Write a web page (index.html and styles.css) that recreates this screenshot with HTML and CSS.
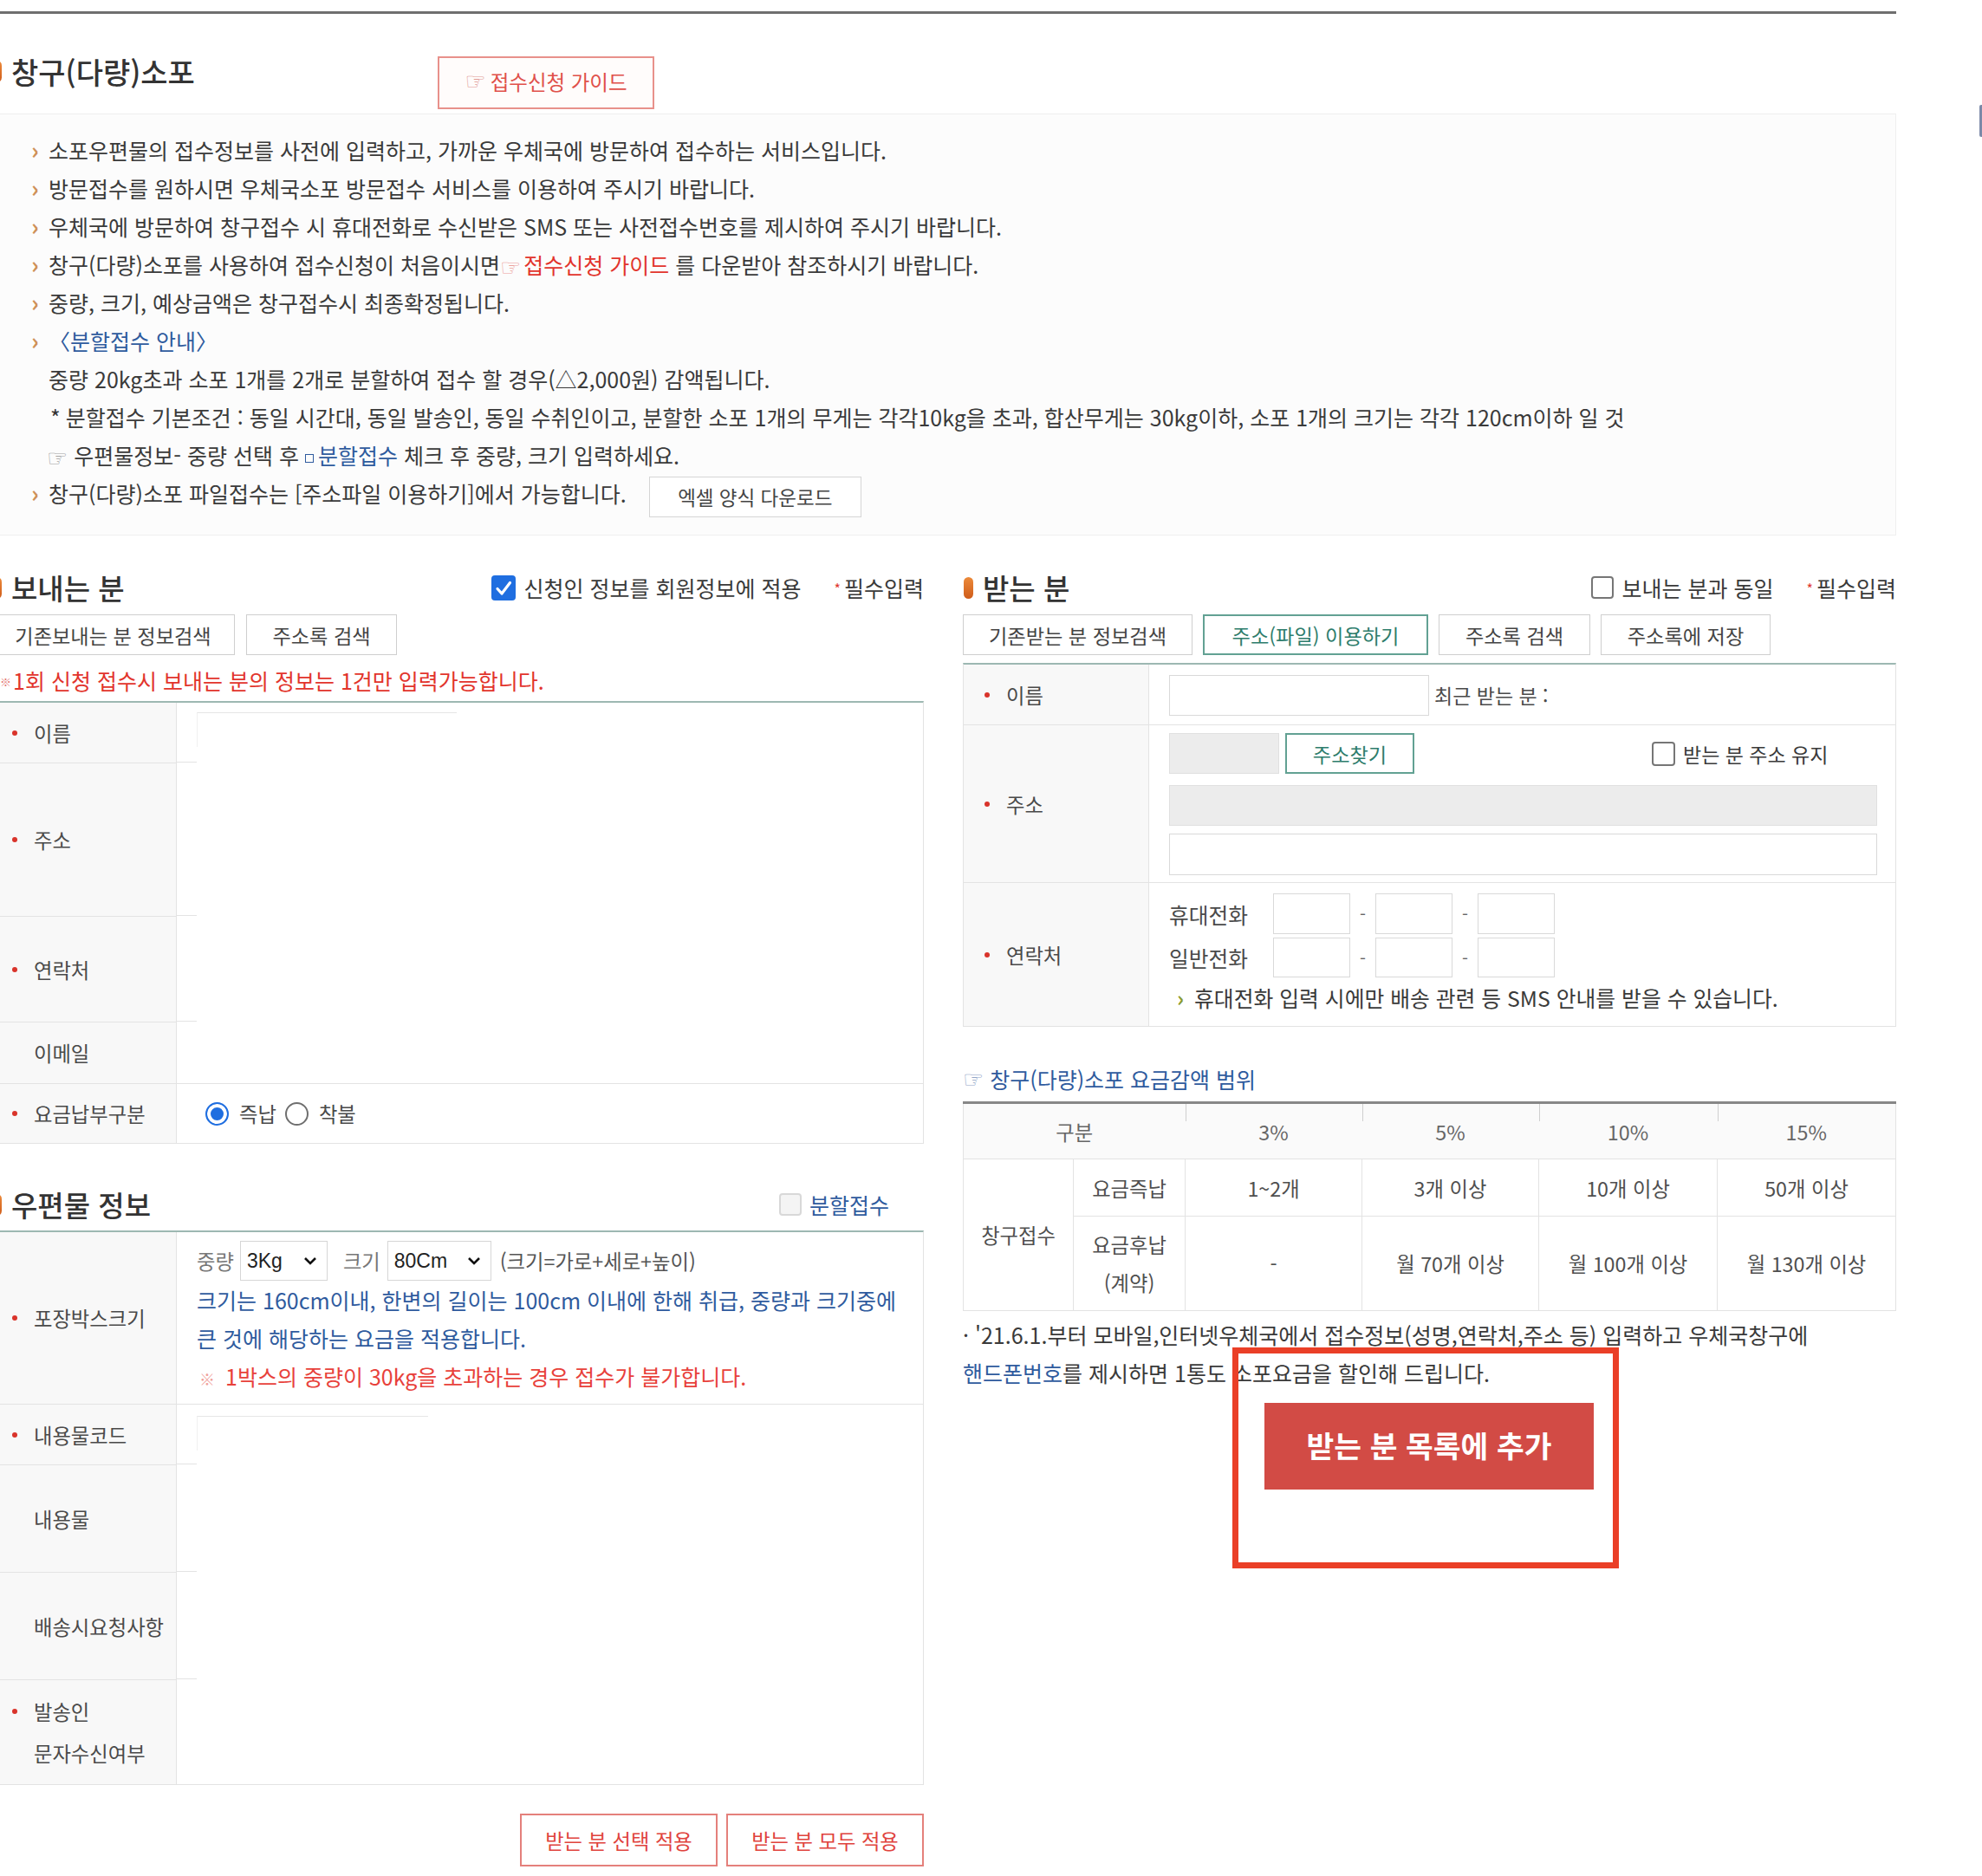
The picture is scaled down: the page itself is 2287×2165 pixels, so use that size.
FILE: index.html
```html
<!DOCTYPE html>
<html lang="ko">
<head>
<meta charset="utf-8">
<title>창구(다량)소포</title>
<link rel="stylesheet" href="styles.css">
</head>
<body>
<div class="page">
  <div class="toprule"></div>

  <div class="title-row">
    <h2 class="h-title"><span class="mark"></span>창구(다량)소포</h2>
    <a class="guide-btn"><span class="hand">☞</span>접수신청 가이드</a>
  </div>

  <div class="info">
    <ul class="info-list">
      <li><span class="b">›</span>소포우편물의 접수정보를 사전에 입력하고, 가까운 우체국에 방문하여 접수하는 서비스입니다.</li>
      <li><span class="b">›</span>방문접수를 원하시면 우체국소포 방문접수 서비스를 이용하여 주시기 바랍니다.</li>
      <li><span class="b">›</span>우체국에 방문하여 창구접수 시 휴대전화로 수신받은 SMS 또는 사전접수번호를 제시하여 주시기 바랍니다.</li>
      <li><span class="b">›</span>창구(다량)소포를 사용하여 접수신청이 처음이시면<span class="hand red-h">☞</span><span class="red">접수신청 가이드</span> 를 다운받아 참조하시기 바랍니다.</li>
      <li><span class="b">›</span>중량, 크기, 예상금액은 창구접수시 최종확정됩니다.</li>
      <li><span class="b">›</span><span class="blue">〈분할접수 안내〉</span></li>
      <li class="plain">중량 20kg초과 소포 1개를 2개로 분할하여 접수 할 경우(△2,000원) 감액됩니다.</li>
      <li class="plain sub"><span class="ast">*</span>분할접수 기본조건 : 동일 시간대, 동일 발송인, 동일 수취인이고, 분할한 소포 1개의 무게는 각각10kg을 초과, 합산무게는 30kg이하, 소포 1개의 크기는 각각 120cm이하 일 것</li>
      <li class="plain sub2"><span class="hand gray-h">☞</span>우편물정보- 중량 선택 후 <span class="sq"></span><span class="blue">분할접수</span> 체크 후 중량, 크기 입력하세요.</li>
      <li><span class="b">›</span>창구(다량)소포 파일접수는 [주소파일 이용하기]에서 가능합니다.<span class="xls-btn">엑셀 양식 다운로드</span></li>
    </ul>
  </div>

  <div class="cols">
    <!-- LEFT COLUMN -->
    <div class="col col-left">
      <div class="sec-head">
        <h3 class="h-sec"><span class="mark"></span>보내는 분</h3>
        <div class="sec-opts">
          <span class="chk on"><svg viewBox="0 0 28 29" width="28" height="29"><path d="M7 15.5 L12 21 L21.5 8.5" fill="none" stroke="#fff" stroke-width="3.2" stroke-linecap="round" stroke-linejoin="round"/></svg></span>
          <span class="opt-txt">신청인 정보를 회원정보에 적용</span>
          <span class="req-note"><i>*</i>필수입력</span>
        </div>
      </div>
      <div class="btns">
        <span class="btn w281">기존보내는 분 정보검색</span>
        <span class="btn w174">주소록 검색</span>
      </div>
      <p class="notice"><span class="kome">※</span>1회 신청 접수시 보내는 분의 정보는 1건만 입력가능합니다.</p>

      <div class="ftable ft-left">
        <div class="frow h70"><div class="fl"><i class="dot"></i>이름</div><div class="fc ghost"><span class="ghost-in"></span></div></div>
        <div class="frow h177"><div class="fl"><i class="dot"></i>주소</div><div class="fc ghost"></div></div>
        <div class="frow h122"><div class="fl"><i class="dot"></i>연락처</div><div class="fc ghost"></div></div>
        <div class="frow h71"><div class="fl nodot">이메일</div><div class="fc"></div></div>
        <div class="frow h69"><div class="fl"><i class="dot"></i>요금납부구분</div>
          <div class="fc radios">
            <span class="radio on"></span><span class="r-txt">즉납</span>
            <span class="radio"></span><span class="r-txt">착불</span>
          </div>
        </div>
      </div>

      <div class="sec-head mt50">
        <h3 class="h-sec"><span class="mark"></span>우편물 정보</h3>
        <div class="sec-opts">
          <span class="chk dis"></span>
          <span class="opt-txt blue split">분할접수</span>
        </div>
      </div>

      <div class="ftable ft-left ft2">
        <div class="frow h199"><div class="fl"><i class="dot"></i>포장박스크기</div>
          <div class="fc pkg">
            <div class="pk-line">
              <span class="g">중량</span>
              <span class="sel w101">3Kg<svg viewBox="0 0 16 10" width="16" height="10"><path d="M2 2 L8 8 L14 2" fill="none" stroke="#111" stroke-width="2.6"/></svg></span>
              <span class="g g2">크기</span>
              <span class="sel w120">80Cm<svg viewBox="0 0 16 10" width="16" height="10"><path d="M2 2 L8 8 L14 2" fill="none" stroke="#111" stroke-width="2.6"/></svg></span>
              <span class="formula">(크기=가로+세로+높이)</span>
            </div>
            <div class="pk-blue">크기는 160cm이내, 한변의 길이는 100cm 이내에 한해 취급, 중량과 크기중에<br>큰 것에 해당하는 요금을 적용합니다.</div>
            <div class="pk-red"><span class="kome2">※</span>1박스의 중량이 30kg을 초과하는 경우 접수가 불가합니다.</div>
          </div>
        </div>
        <div class="frow h70"><div class="fl"><i class="dot"></i>내용물코드</div><div class="fc ghost"><span class="ghost-in gi2"></span></div></div>
        <div class="frow h124"><div class="fl nodot">내용물</div><div class="fc ghost"></div></div>
        <div class="frow h124"><div class="fl nodot">배송시요청사항</div><div class="fc ghost"></div></div>
        <div class="frow h121"><div class="fl two"><i class="dot"></i><span>발송인<br>문자수신여부</span></div><div class="fc"></div></div>
      </div>

      <div class="bottom-btns">
        <span class="rbtn">받는 분 선택 적용</span>
        <span class="rbtn">받는 분 모두 적용</span>
      </div>
    </div>

    <!-- RIGHT COLUMN -->
    <div class="col col-right">
      <div class="sec-head">
        <h3 class="h-sec"><span class="mark"></span>받는 분</h3>
        <div class="sec-opts">
          <span class="chk"></span>
          <span class="opt-txt">보내는 분과 동일</span>
          <span class="req-note"><i>*</i>필수입력</span>
        </div>
      </div>
      <div class="btns gap12">
        <span class="btn w265">기존받는 분 정보검색</span>
        <span class="btn w260 teal">주소(파일) 이용하기</span>
        <span class="btn w175">주소록 검색</span>
        <span class="btn w196">주소록에 저장</span>
      </div>

      <div class="ftable ft-right">
        <div class="frow h70"><div class="fl"><i class="dot"></i>이름</div>
          <div class="fc name-c"><span class="inp w300"></span><span class="recent">최근 받는 분 :</span></div>
        </div>
        <div class="frow h182"><div class="fl"><i class="dot"></i>주소</div>
          <div class="fc addr">
            <div class="zip-row">
              <span class="inp gray w127"></span>
              <span class="btn teal zipbtn">주소찾기</span>
              <span class="chk keep"></span><span class="opt-txt keep-t">받는 분 주소 유지</span>
            </div>
            <span class="inp gray full a1"></span>
            <span class="inp full a2"></span>
          </div>
        </div>
        <div class="frow h166"><div class="fl"><i class="dot"></i>연락처</div>
          <div class="fc tel">
            <div class="tel-row"><span class="tl">휴대전화</span><span class="inp tin"></span><span class="dash">-</span><span class="inp tin"></span><span class="dash">-</span><span class="inp tin"></span></div>
            <div class="tel-row r2"><span class="tl">일반전화</span><span class="inp tin"></span><span class="dash">-</span><span class="inp tin"></span><span class="dash">-</span><span class="inp tin"></span></div>
            <div class="tel-note"><span class="gb">›</span>휴대전화 입력 시에만 배송 관련 등 SMS 안내를 받을 수 있습니다.</div>
          </div>
        </div>
      </div>

      <p class="rate-title"><span class="hand blue-h">☞</span>창구(다량)소포 요금감액 범위</p>
      <table class="rate">
        <colgroup><col class="c127"><col class="c129"><col class="c204"><col class="c204"><col class="c206"><col class="c206"></colgroup>
        <thead>
          <tr><th colspan="2">구분</th><th class="dv">3%</th><th class="dv">5%</th><th class="dv">10%</th><th class="dv">15%</th></tr>
        </thead>
        <tbody>
          <tr class="r1"><td rowspan="2">창구접수</td><td>요금즉납</td><td>1~2개</td><td>3개 이상</td><td>10개 이상</td><td>50개 이상</td></tr>
          <tr class="r2"><td class="two-l">요금후납<br>(계약)</td><td>-</td><td>월 70개 이상</td><td>월 100개 이상</td><td>월 130개 이상</td></tr>
        </tbody>
      </table>
      <p class="rate-note">· '21.6.1.부터 모바일,인터넷우체국에서 접수정보(성명,연락처,주소 등) 입력하고 우체국창구에<br><span class="blue2">핸드폰번호</span>를 제시하면 1통도 소포요금을 할인해 드립니다.</p>
      <a class="add-btn">받는 분 목록에 추가</a>
    </div>
  </div>

  <div class="annot"></div>
  <div class="edge"></div>
</div>
</body>
</html>
```

FILE: styles.css
```css
* { box-sizing: border-box; }
html, body { margin: 0; padding: 0; background: #fff; }
body {
  font-family: "Noto Sans CJK KR", "Noto Sans", sans-serif;
  font-size: 25px;
  color: #3a3a3a;
  overflow: hidden;
}
p, ul, h2, h3 { margin: 0; padding: 0; }
ul { list-style: none; }
i { font-style: normal; }

.page {
  position: relative;
  width: 2198px;
  min-height: 2165px;
  margin-left: -10px;
  padding-top: 13px;
}
.toprule { height: 3px; background: #6f6f6f; }

/* title */
.title-row { display: flex; height: 115px; }
.h-title {
  flex: 0 0 515px;
  margin-top: 46px;
  height: 40px;
  display: flex;
  align-items: center;
  font-size: 34px;
  font-weight: 500;
  color: #333;
}
.mark {
  display: inline-block;
  width: 11px;
  height: 25px;
  margin: 0 11px 0 1px;
  border-radius: 6px;
  background: linear-gradient(#ec8a3a, #cf5c1a);
}
.guide-btn {
  margin-top: 49px;
  width: 250px;
  height: 61px;
  border: 2px solid #e8918b;
  background: #fffcfb;
  color: #e0504a;
  font-size: 23.5px;
  display: flex;
  align-items: center;
  justify-content: center;
  padding-bottom: 4px;
}
.hand {
  font-family: "DejaVu Sans", sans-serif;
  font-size: 27px;
  line-height: 1;
  margin-right: 5px;
  color: #e09a96;
  vertical-align: -2px;
}
.red-h { color: #eca29d; margin: 0 3px 0 0; }
.gray-h { color: #a5a5a5; margin-right: 7px; }
.blue-h { color: #92a6c8; margin-right: 7px; }

/* info box */
.info {
  border: 1px solid #efefef;
  background: #fcfcfc;
  padding: 19px 0 26px;
}
.info-list li {
  height: 44px;
  line-height: 44px;
  padding-left: 45px;
  white-space: nowrap;
}
.info-list li.plain { padding-left: 65px; }
.info-list li.sub { padding-left: 67px; }
.info-list li.sub2 { padding-left: 63px; }
.b { display: inline-block; width: 20px; color: #cf9158; font-weight: 700; font-size: 27px; }
.red { color: #e2342c; }
.blue { color: #2f5b9e; }
.ast { margin-right: 6px; color: #333; }
.sq { display: inline-block; width: 10px; height: 10px; border: 1.5px solid #2f5b9e; margin-right: 5px; vertical-align: 2px; }
.xls-btn {
  margin-left: 26px;
  width: 245px;
  height: 47px;
  border: 1px solid #d5d5d5;
  background: #fff;
  font-size: 22.5px;
  color: #444;
  display: inline-flex;
  align-items: center;
  justify-content: center;
  line-height: 1;
  vertical-align: middle;
}

/* columns */
.cols { display: flex; gap: 45px; }
.col-left { width: 1076px; }
.col-right { width: 1077px; }

.sec-head { display: flex; align-items: center; height: 40px; margin-top: 40px; }
.sec-head.mt50 { margin-top: 50px; }
.h-sec {
  display: flex;
  align-items: center;
  font-size: 33px;
  font-weight: 500;
  color: #333;
}
.sec-opts { margin-left: auto; display: flex; align-items: center; }
.opt-txt { margin-left: 9px; font-size: 25px; color: #3a3a3a; }
.opt-txt.split { color: #2f5b9e; margin-right: 40px; }
.opt-txt.keep-t { font-size: 23px; }
.req-note { margin-left: 38px; font-size: 25px; color: #3a3a3a; }
.req-note i { color: #e03a30; font-size: 16px; margin-right: 4px; vertical-align: 3px; }

.chk {
  display: inline-block;
  width: 26px;
  height: 26px;
  border: 2px solid #767676;
  border-radius: 4px;
  background: #fff;
}
.chk.on { width: 28px; height: 29px; border: 0; background: #1f6ee0; }
.chk.on svg { display: block; }
.chk.dis { border: 2px solid #d8d8d8; background: #f4f4f4; }

.btns { display: flex; gap: 13px; margin-top: 11px; }
.btns.gap12 { gap: 12px; }
.btn {
  height: 47px;
  border: 1px solid #cfcfcf;
  background: #fff;
  font-size: 23.2px;
  color: #444;
  display: flex;
  align-items: center;
  justify-content: center;
}
.btn.teal { border: 2px solid #62a193; color: #2e7d6c; }
.w281 { width: 281px; }
.w174 { width: 174px; }
.w265 { width: 265px; }
.w260 { width: 260px; }
.w175 { width: 175px; }
.w196 { width: 196px; }

.notice {
  margin-top: 14px;
  height: 30px;
  line-height: 30px;
  color: #e2342c;
  font-size: 25px;
  padding-left: 10px;
}
.kome { font-size: 13px; color: #e57b75; margin-right: 2px; vertical-align: 4px; }

/* form tables */
.ftable { border-top: 2px solid #9db8b2; border-right: 1px solid #e3e3e3; }
.ft-left { margin-top: 9px; }
.ft-left.ft2 { margin-top: 10px; }
.ft-right { margin-top: 9px; border-left: 1px solid #e3e3e3; }
.frow { display: grid; grid-template-columns: 214px 1fr; }
.h69 { height: 69px; } .h70 { height: 70px; } .h71 { height: 71px; }
.h121 { height: 121px; } .h122 { height: 122px; } .h124 { height: 124px; }
.h166 { height: 166px; } .h177 { height: 177px; } .h182 { height: 182px; } .h199 { height: 199px; }
.fl {
  background: #f8f8f8;
  border-right: 1px solid #e3e3e3;
  border-bottom: 1px solid #e3e3e3;
  display: flex;
  align-items: center;
  padding-left: 24px;
  font-size: 23.3px;
  color: #4a4a4a;
}
.fl.nodot { padding-left: 49px; }
.fl.two span { line-height: 48px; }
.dot {
  display: inline-block;
  width: 6px;
  height: 6px;
  border-radius: 50%;
  background: #d9342b;
  margin-right: 19px;
  flex: none;
}
.fl.two .dot { margin-top: -48px; }
.fc {
  border-bottom: 1px solid #e3e3e3;
  padding-left: 23px;
  background: #fff;
}
.fc.ghost {
  border-bottom-color: transparent;
  background: linear-gradient(#e3e3e3, #e3e3e3) left bottom / 23px 1px no-repeat, #fff;
}
.ghost-in {
  display: block;
  width: 300px;
  height: 40px;
  margin-top: 11px;
  border-top: 1px solid #e6e6e6;
  border-left: 1px solid #f0f0f0;
}
.ghost-in.gi2 { width: 267px; margin-top: 13px; }

.radios { display: flex; align-items: center; padding-left: 33px; }
.radio {
  width: 27px;
  height: 27px;
  border-radius: 50%;
  border: 2px solid #6f6f6f;
  background: #fff;
}
.radio.on { border: 2px solid #1f6ee0; background: #1f6ee0; box-shadow: inset 0 0 0 4px #fff; }
.r-txt { margin: 0 10px 0 12px; font-size: 23.3px; color: #4a4a4a; }

.pkg { padding-top: 10px; }
.pk-line { display: flex; align-items: center; height: 46px; font-size: 23.3px; }
.g { color: #777; margin-right: 7px; }
.g2 { margin-left: 18px; margin-right: 8px; }
.sel {
  height: 46px;
  border: 1px solid #d6d6d6;
  background: #fff;
  display: flex;
  align-items: center;
  justify-content: space-between;
  padding: 0 11px 0 7px;
  font-family: "Liberation Sans", Arial, sans-serif;
  font-size: 23px;
  color: #222;
}
.w101 { width: 101px; }
.w120 { width: 120px; }
.formula { margin-left: 10px; color: #555; }
.pk-blue { color: #2f5b9e; line-height: 44px; white-space: nowrap; }
.pk-red { color: #e8413b; line-height: 44px; padding-left: 3px; white-space: nowrap; }
.kome2 { color: #f0a19b; font-size: 18px; margin-right: 12px; }

.bottom-btns { display: flex; justify-content: flex-end; gap: 10px; margin-top: 33px; }
.rbtn {
  width: 228px;
  height: 61px;
  border: 2px solid #e4807b;
  background: #fff;
  color: #e0433d;
  font-size: 23.3px;
  display: flex;
  align-items: center;
  justify-content: center;
}

/* right table */
.inp {
  display: inline-block;
  height: 47px;
  border: 1px solid #d9d9d9;
  background: #fff;
}
.inp.gray { background: #ececec; border-color: #e0e0e0; }
.w300 { width: 300px; }
.w127 { width: 127px; }
.name-c { display: flex; align-items: center; }
.name-c .inp { height: 47px; margin-top: 2px; }
.recent { margin-left: 6px; font-size: 23px; color: #4a4a4a; }
.addr { padding: 9px 21px 0 23px; display: flex; flex-direction: column; }
.zip-row { display: flex; align-items: center; }
.zipbtn { width: 149px; margin-left: 7px; }
.chk.keep { margin-left: 274px; width: 27px; height: 28px; }
.inp.full { display: block; width: 100%; }
.a1 { margin-top: 13px; }
.a2 { margin-top: 9px; height: 48px; }
.tel { padding-top: 12px; }
.tel-row { display: flex; align-items: center; height: 47px; }
.tel-row.r2 { margin-top: 4px; height: 46px; }
.tl { width: 120px; font-size: 24.7px; color: #4a4a4a; }
.tin { width: 89px; height: 100%; }
.dash { width: 29px; text-align: center; color: #666; font-size: 20px; }
.tel-note { margin-top: 8px; height: 30px; line-height: 30px; font-size: 24.8px; color: #3a3a3a; padding-left: 9px; white-space: nowrap; }
.gb { color: #8a9b2e; font-weight: 700; margin-right: 12px; }

/* rate table */
.rate-title {
  margin-top: 45px;
  height: 30px;
  line-height: 30px;
  color: #2f5b9e;
  font-size: 25px;
  display: flex;
  align-items: center;
}
.rate {
  margin-top: 11px;
  width: 1076px;
  border-collapse: collapse;
  table-layout: fixed;
  font-size: 23.3px;
  color: #4f4f4f;
}
.c127 { width: 127px; } .c129 { width: 129px; } .c204 { width: 204px; } .c206 { width: 206px; }
.rate thead th {
  height: 65px;
  border-top: 3px solid #878787;
  border-bottom: 1px solid #e3e3e3;
  background: #fafafa;
  font-weight: 400;
  color: #666;
  padding: 0;
}
.rate thead th:first-child { border-left: 1px solid #e3e3e3; }
.rate thead th:last-child { border-right: 1px solid #e3e3e3; }
.rate thead th.dv { background: linear-gradient(#cfcfcf, #cfcfcf) left top / 1px 20px no-repeat, #fafafa; }
.rate td {
  border: 1px solid #e3e3e3;
  text-align: center;
  padding: 0;
  background: #fff;
}
.rate tr.r1 td { height: 66px; }
.rate tr.r2 td { height: 109px; }
.rate td.two-l { line-height: 44px; }

.rate-note { margin-top: 5px; line-height: 44px; font-size: 25px; color: #3a3a3a; white-space: nowrap; }
.blue2 { color: #2f5b9e; }

.add-btn {
  display: flex;
  align-items: center;
  justify-content: center;
  width: 380px;
  height: 100px;
  margin: 13px 0 0 348px;
  background: #d24b45;
  color: #fff;
  font-size: 34.5px;
  font-weight: 700;
  padding-bottom: 4px;
}

/* overlays */
.annot {
  position: absolute;
  left: 1432px;
  top: 1555px;
  width: 446px;
  height: 255px;
  border: 7px solid #ea3f27;
}
.edge {
  position: absolute;
  left: 2294px;
  top: 121px;
  width: 4px;
  height: 37px;
  background: #7b89a8;
  border-radius: 2px 0 0 2px;
}
```
